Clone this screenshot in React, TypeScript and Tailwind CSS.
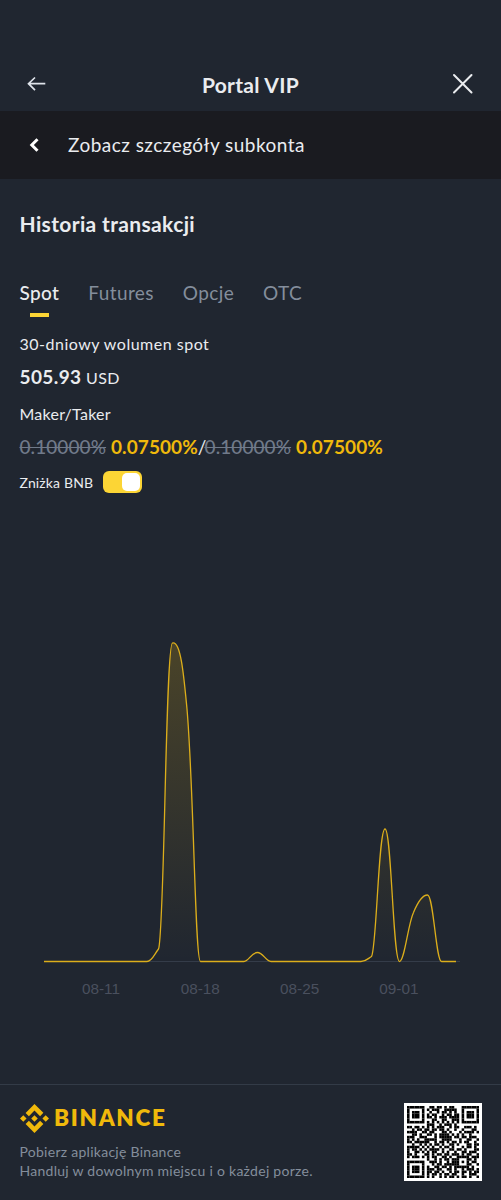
import { SiBinance } from 'react-icons/si';

const tabs = ['Futures', 'Opcje', 'OTC'];

const dates = ['08-11', '08-18', '08-25', '09-01'];

const line =
  'M44 361.500H147C152 361.500 154.500 354 158.500 349C164.500 336 165.500 43 172.500 43C181 40.500 184 78 187 109C194 191 195 361.500 200.500 361.500H244C249 361.500 251 352.500 257.500 352.500C263 352.500 266 361.500 271 361.500H361C366 361.500 368 358.500 371.500 356.500C376.500 350 378.500 229 385 229C391.500 229 393 361.500 399.500 361.500C404.500 361.500 408 324 413.500 312.500C417 304 422 295 427.500 295C433.500 295 436 361.500 441.500 361.500H456';

const qrRows = [
  '#######..##.##.#.##...#######',
  '#.....#.#.###..#####..#.....#',
  '#.###.#..#..#.##.#.#..#.###.#',
  '#.###.#.#.##..#.##.##.#.###.#',
  '#.###.#.##.#.###.####.#.###.#',
  '#.....#...##..##..###.#.....#',
  '#######.#.#.#.#.#.#.#.#######',
  '........###..#.###.#.........',
  '##.##.#.#.#.###..#.##..###.#.',
  '..#.##.##.##.##.#..#..#...##.',
  '####..##.##...##.#...#.####.#',
  '..##.#..##.#.####.#.#.#..#...',
  '###..###...#.#####.##.##.###.',
  '#.#.#..#####..####...#..##..#',
  '##.######..#.##.#.##.#.##..#.',
  '..#..#.#.#.##.#..##.#...##.##',
  '#####.#.#.#..#.##.#...#.##.#.',
  '#.##.#.#.####.#..##.##.#...##',
  '#..##.#.#.##..#.#..#..##.###.',
  '##.#...##.#.##.##.###.#.##..#',
  '#.###.#.#.##..##.#..#####.###',
  '........#..#.#.##.###...##.#.',
  '#######..###.#..#.###.#.#.##.',
  '#.....#...#.##.######...##..#',
  '#.###.#.#..##.##.#.######.#..',
  '#.###.#.###.##..##.#..#.###.#',
  '#.###.#.##.##.#..#.##.##.#.##',
  '#.....#.#.##.#.##.##..#..###.',
  '#######.#.#..#.#.##.#.##.#..#',
];

const QrCode = () => {
  return (
    <div className="h-[78px] w-[78px] bg-white p-[3px]">
      <svg viewBox="0 0 29 29" className="h-full w-full" fill="#000">
        {qrRows.map((row, y) =>
          row.split('').map((cell, x) =>
            cell === '#' ? <rect key={`${x}-${y}`} x={x} y={y} width="1.03" height="1.03" /> : null
          )
        )}
      </svg>
    </div>
  );
};

const VolumeChart = () => {
  return (
    <div className="h-[410px]">
      <svg viewBox="0 0 501 410" className="h-[410px] w-[501px]">
        <defs>
          <linearGradient id="volume" gradientUnits="userSpaceOnUse" x1="0" y1="43" x2="0" y2="361">
            <stop offset="0" stopColor="#f0b90b" stopOpacity="0.2" />
            <stop offset="1" stopColor="#f0b90b" stopOpacity="0" />
          </linearGradient>
        </defs>
        <path d="M44 361.500H460" stroke="#343c49" />
        <path d={`${line}Z`} fill="url(#volume)" />
        <path d={line} fill="none" stroke="#dcae1b" strokeWidth="1.300" strokeLinejoin="round" />
        {dates.map((date, i) => (
          <text
            key={date}
            x={101 + i * 99.3}
            y="394"
            textAnchor="middle"
            className="fill-[#4a505e] font-['Liberation_Sans',sans-serif] text-[15.3px]"
          >
            {date}
          </text>
        ))}
      </svg>
    </div>
  );
};

const App = () => {
  return (
    <div className="flex h-[1200px] w-[501px] flex-col overflow-hidden bg-[#202630] font-['Lato',sans-serif] text-[#eaecef]">
      <header className="flex h-[111px] shrink-0 items-end justify-between px-[27px] pb-4">
        <svg viewBox="0 0 20 22" className="h-[22px] w-5" fill="none" stroke="#dfe3ea" strokeWidth="1.700">
          <path d="M18.300 10.700H1.500M8 4.500L1.500 10.700L8 17.200" />
        </svg>
        <h1 className="ml-[2px] text-[21px] leading-[20px] font-bold tracking-[0.28px]">Portal VIP</h1>
        <svg viewBox="0 0 22 22" className="h-[22px] w-[22px]" fill="none" stroke="#eaecef" strokeWidth="2">
          <path d="M2 2L19.500 19.500M19.500 2L2 19.500" strokeLinecap="round" />
        </svg>
      </header>

      <div className="flex h-[68px] shrink-0 items-center bg-[#1a1b20] pl-[29px]">
        <svg viewBox="0 0 10 14" className="h-[14px] w-[10px]" fill="none" stroke="#fff" strokeWidth="3">
          <path d="M8.500 1.300L2.800 7L8.500 12.700" />
        </svg>
        <span className="ml-[29px] text-[19px] tracking-[0.47px]">Zobacz szczegóły subkonta</span>
      </div>

      <main className="flex flex-col items-start px-[19.5px] whitespace-nowrap">
        <h2 className="mt-[31px] h-7 text-[21px] leading-7 font-bold tracking-[0.36px]">Historia transakcji</h2>
        <div className="mt-[41px] flex h-[38px] gap-[29px] text-[19px] leading-7 tracking-[0.38px] text-[#848e9c]">
          <div className="flex flex-col items-center text-[#eaecef]">
            <span className="h-[34px] font-medium">Spot</span>
            <span className="h-1 w-[19px] bg-[#fcd535]" />
          </div>
          {tabs.map((tab) => (
            <span key={tab}>{tab}</span>
          ))}
        </div>
        <p className="mt-[17px] h-5 text-[16px] leading-5 tracking-[0.5px]">30-dniowy wolumen spot</p>
        <p className="mt-[11px] h-6 text-[16px] leading-6 tracking-[0.4px]">
          <span className="text-[19px] font-bold">505.93</span> USD
        </p>
        <p className="mt-[15px] h-5 text-[16px] leading-5 tracking-[0.25px]">Maker/Taker</p>
        <p className="mt-[11px] h-6 text-[19px] leading-6 tracking-[0.08px]">
          <s className="font-medium text-[#707a8a]">0.10000%</s>{' '}
          <b className="text-[#f0b90b]">0.07500%</b>
          <span className="-mr-[2px]">/</span>
          <s className="font-medium text-[#707a8a]">0.10000%</s>{' '}
          <b className="text-[#f0b90b]">0.07500%</b>
        </p>
        <div className="mt-3 flex h-[22px] items-center text-[14px]">
          <span className="tracking-[0.15px]">Zniżka BNB</span>
          <span className="ml-[10px] flex h-[22px] w-[39px] items-center justify-end rounded-[6px] bg-[#fcd535] pr-[2px]">
            <span className="h-[18px] w-[18px] rounded-[5px] bg-white" />
          </span>
        </div>
      </main>

      <div className="mt-[107px]">
        <VolumeChart />
      </div>

      <footer className="mt-auto flex h-[116px] shrink-0 justify-between border-t border-[#333b47] pt-[18px] pr-[19px] pl-[19.5px]">
        <div>
          <div className="flex h-[30px] items-center text-[#f0b90b]">
            <SiBinance className="h-[29px] w-[29px]" />
            <span className="ml-[5.5px] text-[22.5px] leading-[28px] font-extrabold tracking-[1.7px]">BINANCE</span>
          </div>
          <p className="mt-[9px] text-[14px] leading-[19px] tracking-[0.27px] text-[#848e9c]">
            Pobierz aplikację Binance
            <br />
            Handluj w dowolnym miejscu i o każdej porze.
          </p>
        </div>
        <QrCode />
      </footer>
    </div>
  );
};

export default App;
